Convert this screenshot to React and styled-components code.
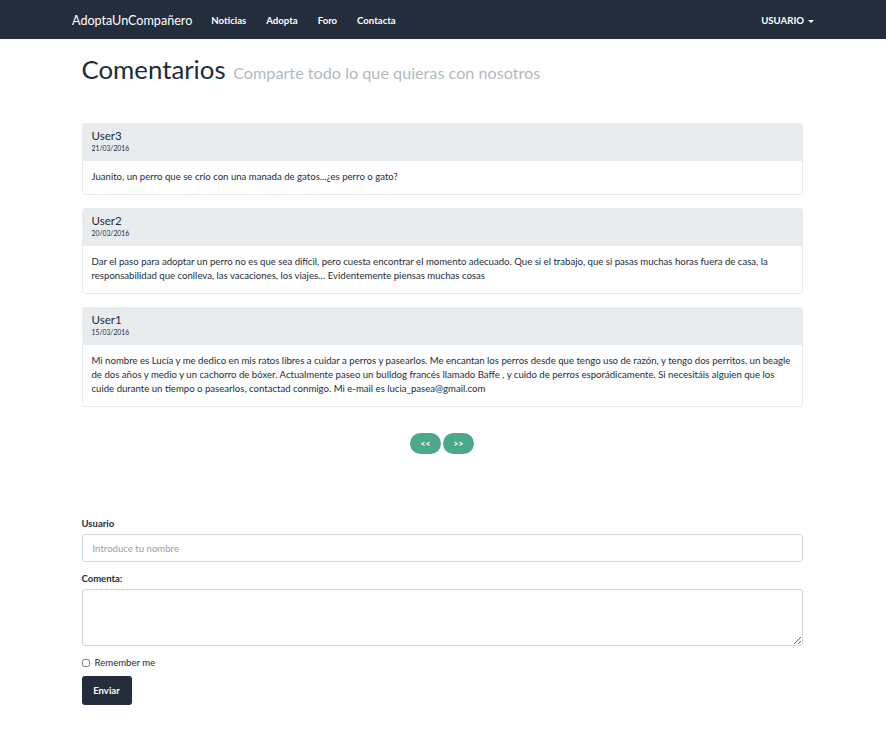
import React from "react";
import styled, { createGlobalStyle } from "styled-components";

const Global = createGlobalStyle`
  html, body { margin: 0; padding: 0; background: #fff; }
  body { font-family: Lato, "Open Sans", sans-serif; color: #2c3e50; }
  * { box-sizing: border-box; }
`;

const Navbar = styled.nav`
  height: 39px;
  background: #232d3b;
  display: flex;
  align-items: center;
  justify-content: space-between;
  padding: 1px 72px 0 72px;
`;

const NavLeft = styled.div`
  display: flex;
  align-items: center;
  gap: 20px;
`;

const Brand = styled.a`
  color: #fff;
  font-size: 12.6px;
  margin-right: -1px;
  text-decoration: none;
`;

const NavLink = styled.a`
  color: #fff;
  font-size: 9.6px;
  font-weight: 700;
  text-decoration: none;
`;

const Caret = styled.span`
  display: inline-block;
  margin-left: 4px;
  vertical-align: middle;
  border-top: 3px solid #fff;
  border-left: 3px solid transparent;
  border-right: 3px solid transparent;
`;

const Container = styled.main`
  width: 721px;
  margin: 0 auto;
  padding-top: 14px;
  position: relative;
  left: -1px;
`;

const Title = styled.h1`
  margin: 0 0 38px;
  font-size: 25.8px;
  font-weight: 400;
  color: #212b38;
  line-height: 1.25;
`;

const Sub = styled.small`
  font-size: 16.2px;
  color: #b1b9bf;
  margin-left: 1px;
`;

const Panel = styled.section`
  border: 1px solid #e7eaec;
  border-radius: 3px;
  margin-bottom: 13px;
  overflow: hidden;
`;

const PanelHead = styled.header`
  background: #e9ecee;
  padding: 5px 9px 6px;
  height: 37px;
`;

const User = styled.div`
  font-size: 11.5px;
  color: #222d3a;
  line-height: 14px;
`;

const DateText = styled.div`
  font-size: 6.8px;
  color: #222d3a;
  margin-top: 1px;
`;

const PanelBody = styled.div`
  padding: 9px 8px 10px 9px;
  font-size: 9.6px;
  line-height: 14px;
  color: #222d3a;
`;

const Pager = styled.div`
  display: flex;
  justify-content: center;
  gap: 2px;
  margin-top: 26px;
`;

const PageBtn = styled.button`
  width: 31px;
  height: 21px;
  border: none;
  border-radius: 11px;
  background: #4aa987;
  color: #fff;
  font-family: Lato, sans-serif;
  font-weight: 700;
  font-size: 8.5px;
  padding: 0;
`;

const Form = styled.form`
  margin-top: 64px;
  display: flex;
  flex-direction: column;
`;

const Label = styled.label`
  font-size: 9.5px;
  font-weight: 700;
  color: #222d3a;
  margin-bottom: 5px;
`;

const Input = styled.input`
  height: 28px;
  width: 100%;
  border: 1px solid #cfd6dc;
  border-radius: 3px;
  padding: 0 10px;
  font-family: Lato, sans-serif;
  font-size: 9.6px;
  margin-bottom: 11px;
  &::placeholder { color: #97a0a8; }
`;

const Textarea = styled.textarea`
  height: 57px;
  width: 100%;
  border: 1px solid #cfd6dc;
  border-radius: 3px;
  margin-bottom: 11px;
  display: block;
`;

const CheckRow = styled.label`
  display: flex;
  align-items: center;
  gap: 5px;
  font-size: 9.6px;
  color: #222d3a;
  margin-bottom: 8px;
  input { width: 8px; height: 8px; margin: 0; }
`;

const Submit = styled.button`
  width: 50px;
  height: 29px;
  border: none;
  border-radius: 3px;
  background: #232d3b;
  color: #fff;
  font-family: Lato, sans-serif;
  font-weight: 700;
  font-size: 9.6px;
  padding: 0;
  margin-bottom: 28px;
`;

const comments = [
  { user: "User3", date: "21/03/2016", text: "Juanito, un perro que se crio con una manada de gatos...¿es perro o gato?" },
  { user: "User2", date: "20/03/2016", text: "Dar el paso para adoptar un perro no es que sea difícil, pero cuesta encontrar el momento adecuado. Que si el trabajo, que si pasas muchas horas fuera de casa, la responsabilidad que conlleva, las vacaciones, los viajes… Evidentemente piensas muchas cosas" },
  { user: "User1", date: "15/03/2016", text: "Mi nombre es Lucía y me dedico en mis ratos libres a cuidar a perros y pasearlos. Me encantan los perros desde que tengo uso de razón, y tengo dos perritos, un beagle de dos años y medio y un cachorro de bóxer. Actualmente paseo un bulldog francés llamado Baffe , y cuido de perros esporádicamente. Si necesitáis alguien que los cuide durante un tiempo o pasearlos, contactad conmigo. Mi e-mail es lucia_pasea@gmail.com" },
];

export default function App() {
  return (
    <>
      <Global />
      <Navbar>
        <NavLeft>
          <Brand>AdoptaUnCompañero</Brand>
          <NavLink>Noticias</NavLink>
          <NavLink>Adopta</NavLink>
          <NavLink>Foro</NavLink>
          <NavLink>Contacta</NavLink>
        </NavLeft>
        <NavLink>USUARIO<Caret /></NavLink>
      </Navbar>
      <Container>
        <Title>Comentarios <Sub>Comparte todo lo que quieras con nosotros</Sub></Title>
        {comments.map((c) => (
          <Panel key={c.user}>
            <PanelHead>
              <User>{c.user}</User>
              <DateText>{c.date}</DateText>
            </PanelHead>
            <PanelBody>{c.text}</PanelBody>
          </Panel>
        ))}
        <Pager>
          <PageBtn>&lt;&lt;</PageBtn>
          <PageBtn>&gt;&gt;</PageBtn>
        </Pager>
        <Form>
          <Label>Usuario</Label>
          <Input placeholder="Introduce tu nombre" />
          <Label>Comenta:</Label>
          <Textarea />
          <CheckRow><input type="checkbox" /> Remember me</CheckRow>
          <Submit type="button">Enviar</Submit>
        </Form>
      </Container>
    </>
  );
}
